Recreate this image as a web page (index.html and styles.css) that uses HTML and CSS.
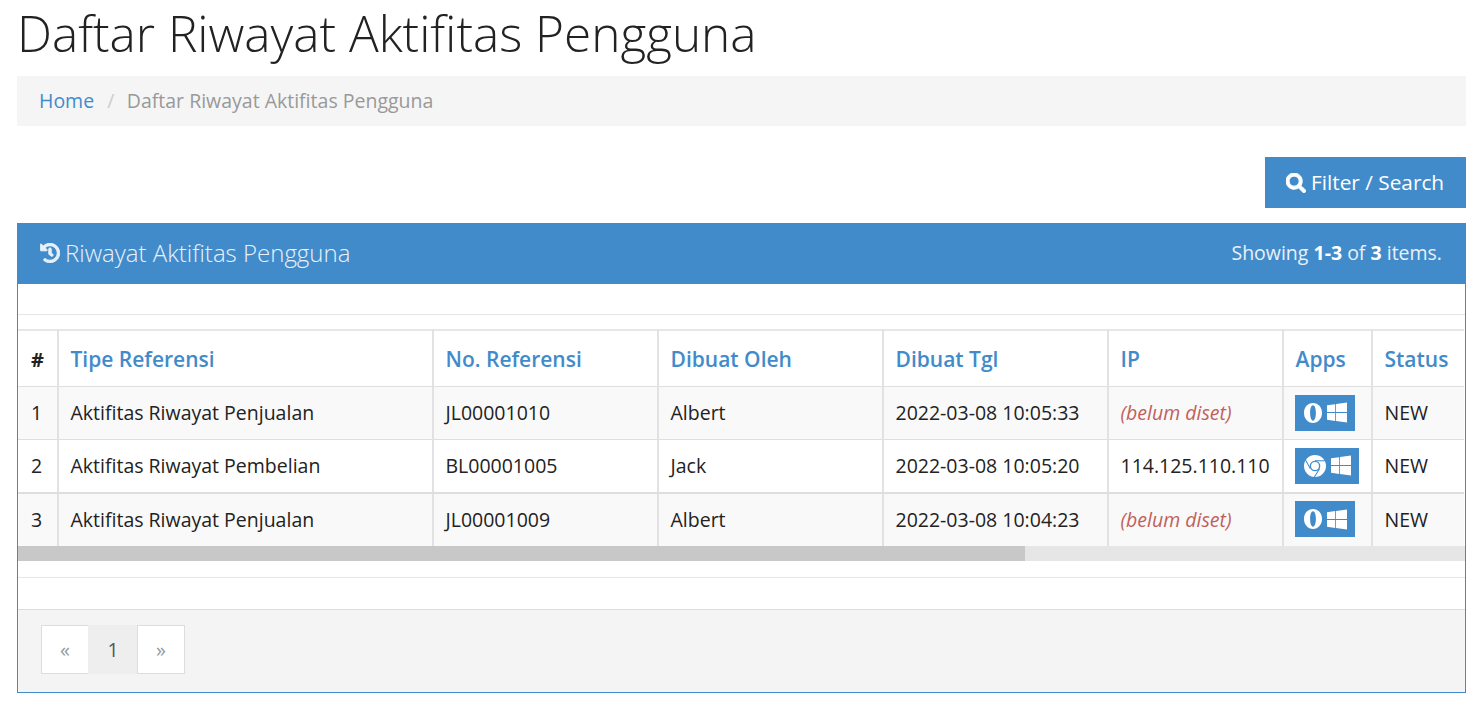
FILE: index.html
```html
<!DOCTYPE html>
<html lang="id">
<head>
<meta charset="utf-8">
<title>Daftar Riwayat Aktifitas Pengguna</title>
<link rel="stylesheet" href="styles.css">
</head>
<body>
<h1 class="title">Daftar Riwayat Aktifitas Pengguna</h1>
<nav class="crumb"><a href="#">Home</a><span class="sep">/</span><span class="here">Daftar Riwayat Aktifitas Pengguna</span></nav>
<div class="actions">
  <button class="btn"><svg class="i-search" viewBox="0 0 512 512"><path class="thick" fill="currentColor" d="M505 442.7L405.3 343c-4.5-4.5-10.6-7-17-7H372c27.6-35.3 44-79.7 44-128C416 93.1 322.9 0 208 0S0 93.1 0 208s93.1 208 208 208c48.3 0 92.7-16.4 128-44v16.3c0 6.4 2.5 12.5 7 17l99.7 99.7c9.4 9.4 24.6 9.4 33.9 0l28.3-28.3c9.4-9.4 9.4-24.6.1-34zM208 336c-70.7 0-128-57.2-128-128 0-70.7 57.2-128 128-128 70.7 0 128 57.2 128 128 0 70.7-57.2 128-128 128z"/></svg>Filter / Search</button>
</div>
<section class="panel">
  <header class="panel-head">
    <h2 class="panel-title"><svg class="i-history" viewBox="0 0 512 512"><path class="thick" fill="currentColor" d="M504 255.531c.253 136.64-111.18 248.372-247.82 248.468-59.015.042-113.223-20.53-155.822-54.911-11.077-8.94-11.905-25.541-1.839-35.607l11.267-11.267c8.609-8.609 22.353-9.551 31.891-1.984C173.062 425.135 212.781 440 256 440c101.705 0 184-82.311 184-184 0-101.705-82.311-184-184-184-48.814 0-93.149 18.969-126.068 49.932l50.754 50.754c10.08 10.08 2.941 27.314-11.313 27.314H24c-8.837 0-16-7.163-16-16V38.627c0-14.254 17.234-21.393 27.314-11.314l49.372 49.372C129.209 34.136 189.552 8 256 8c136.81 0 247.747 110.78 248 247.531zm-180.912 78.784l9.823-12.63c8.138-10.463 6.253-25.542-4.21-33.679L288 256.349V152c0-13.255-10.745-24-24-24h-16c-13.255 0-24 10.745-24 24v135.651l65.409 50.874c10.463 8.137 25.541 6.253 33.679-4.21z"/></svg>Riwayat Aktifitas Pengguna</h2>
    <div class="summary">Showing <b>1-3</b> of <b>3</b> items.</div>
  </header>
  <div class="strip-top"></div>
  <div class="table-wrap">
    <table class="grid">
      <colgroup>
        <col class="c-no"><col class="c-type"><col class="c-ref"><col class="c-by"><col class="c-date"><col class="c-ip"><col class="c-apps"><col class="c-status">
      </colgroup>
      <thead>
        <tr><th class="hash">#</th><th><a href="#">Tipe Referensi</a></th><th><a href="#">No. Referensi</a></th><th><a href="#">Dibuat Oleh</a></th><th><a href="#">Dibuat Tgl</a></th><th><a href="#">IP</a></th><th><a href="#">Apps</a></th><th><a href="#">Status</a></th></tr>
      </thead>
      <tbody>
        <tr class="odd"><td>1</td><td>Aktifitas Riwayat Penjualan</td><td>JL00001010</td><td>Albert</td><td>2022-03-08 10:05:33</td><td><em class="unset">(belum diset)</em></td>
          <td><span class="badge"><svg class="i-opera" viewBox="0 0 20 22"><path fill="currentColor" fill-rule="evenodd" d="M10 0C4.2 0 0 4.7 0 11s4.200 11 10 11 10-4.700 10-11S15.800 0 10 0zm0 2.500c2 0 3.200 3.800 3.200 8.500S12 19.500 10 19.500 6.800 15.700 6.800 11 8 2.500 10 2.500z"/></svg><svg class="i-win" viewBox="0 0 448 512"><path fill="currentColor" d="M0 93.700l183.600-25.300v177.400H0V93.700zm0 324.600l183.600 25.300V268.400H0v149.900zm202.200 28L448 480V268.400H202.200v177.900zm0-380.600v180.100H448V32L202.200 65.700z"/></svg></span></td><td>NEW</td></tr>
        <tr class="tall"><td>2</td><td>Aktifitas Riwayat Pembelian</td><td>BL00001005</td><td>Jack</td><td>2022-03-08 10:05:20</td><td>114.125.110.110</td>
          <td><span class="badge wide"><svg class="i-chrome" viewBox="0 0 24 24"><circle cx="12" cy="12" r="12" fill="currentColor"/><circle cx="12" cy="12" r="5.800" fill="#428bca"/><circle cx="12" cy="12" r="4.300" fill="currentColor"/><path d="M12 6.200h11M6.900 15l-5.200-9.500M17 15l-5.700 9" stroke="#428bca" stroke-width="1.100" fill="none"/></svg><svg class="i-win" viewBox="0 0 448 512"><path fill="currentColor" d="M0 93.700l183.600-25.300v177.400H0V93.700zm0 324.600l183.600 25.300V268.400H0v149.900zm202.200 28L448 480V268.400H202.200v177.900zm0-380.600v180.100H448V32L202.200 65.700z"/></svg></span></td><td>NEW</td></tr>
        <tr class="odd"><td>3</td><td>Aktifitas Riwayat Penjualan</td><td>JL00001009</td><td>Albert</td><td>2022-03-08 10:04:23</td><td><em class="unset">(belum diset)</em></td>
          <td><span class="badge"><svg class="i-opera" viewBox="0 0 20 22"><path fill="currentColor" fill-rule="evenodd" d="M10 0C4.2 0 0 4.7 0 11s4.200 11 10 11 10-4.700 10-11S15.800 0 10 0zm0 2.500c2 0 3.200 3.800 3.200 8.500S12 19.500 10 19.500 6.800 15.700 6.800 11 8 2.500 10 2.500z"/></svg><svg class="i-win" viewBox="0 0 448 512"><path fill="currentColor" d="M0 93.700l183.600-25.300v177.400H0V93.700zm0 324.600l183.600 25.300V268.400H0v149.900zm202.200 28L448 480V268.400H202.200v177.900zm0-380.600v180.100H448V32L202.200 65.700z"/></svg></span></td><td>NEW</td></tr>
      </tbody>
    </table>
    <div class="scrollbar"><div class="thumb"></div></div>
  </div>
  <div class="strip-mid"></div>
  <div class="strip-low"></div>
  <footer class="panel-foot">
    <ul class="pager">
      <li class="page muted">«</li><li class="page current">1</li><li class="page muted">»</li>
    </ul>
  </footer>
</section>
</body>
</html>
```
FILE: styles.css
```css
* { box-sizing: border-box; }
html, body { margin: 0; height: 100%; overflow: hidden; }
body {
  padding: 0 17px;
  background: #fff;
  color: #333;
  font-family: "Open Sans", sans-serif;
  font-size: 19.5px;
}
a { color: #428bca; text-decoration: none; }
.thick { stroke: currentColor; stroke-width: 24; }

.title {
  margin: 0 0 9px;
  height: 67px;
  font-size: 49.5px;
  line-height: 67px;
  font-weight: 300;
  color: #222;
}

.crumb {
  display: flex;
  align-items: center;
  height: 50px;
  padding: 0 22px 2px;
  background: #f5f5f5;
  font-size: 19.5px;
}
.sep { margin: 0 13px; color: #ccc; }
.here { color: #999; margin-left: -0.5px; }

.actions {
  display: flex;
  justify-content: flex-end;
  margin: 31px 0 15px;
}
.btn {
  display: flex;
  align-items: center;
  height: 51px;
  width: 201px;
  padding: 0 0 2px 21px;
  border: 0;
  background: #428bca;
  color: #fff;
  font: 400 20.8px "Open Sans", sans-serif;
}
.i-search { width: 20px; height: 20px; margin: 2px 5px 0 0; }

.panel {
  border: 1px solid #428bca;
  height: 470px;
  display: flex;
  flex-direction: column;
}
.panel-head {
  display: flex;
  align-items: center;
  justify-content: space-between;
  height: 61px;
  margin: -1px -1px 0;
  padding: 0 24px 2px 23px;
  background: #428bca;
  color: #fff;
  flex: none;
}
.panel-title {
  display: flex;
  align-items: center;
  margin: 0;
  font-size: 24px;
  font-weight: 300;
  color: #e8f1f9;
}
.i-history { width: 20px; height: 20px; margin: 0 5px 0 0; }
.summary { font-size: 19.5px; color: #e8f1f9; }
.summary b { color: #fff; }

.strip-top { height: 31px; border-bottom: 1px solid #e6e6e6; flex: none; }

.table-wrap { margin-top: 14px; flex: none; }
.grid {
  width: 1446px;
  table-layout: fixed;
  border-collapse: collapse;
  border-top: 2px solid #e6e6e6;
  font-size: 19.5px;
  color: #222;
}
.c-no { width: 40px; }
.c-type { width: 375px; }
.c-ref, .c-by, .c-date { width: 225px; }
.c-ip { width: 175px; }
.c-apps { width: 89px; }
.c-status { width: 92px; }

.grid th, .grid td {
  padding: 0 12px 0 11.5px;
  text-align: left;
  white-space: nowrap;
  overflow: hidden;
  border-left: 2px solid #e2e2e2;
  border-bottom: 1px solid #dedede;
}
.grid th:first-child, .grid td:first-child { border-left: 0; padding-left: 13px; }
.grid th { height: 56px; padding-top: 2px; font-size: 21px; font-weight: 600; }
.grid td { height: 53px; }
.grid .tall td { height: 54px; border-bottom-width: 2px; }
.grid tbody tr:last-child td { border-bottom: 0; padding-bottom: 2px; }
.grid th.hash { color: #222; font-weight: 700; font-size: 20px; }
.odd td { background: #f9f9f9; }
.unset { color: #c0605c; font-style: italic; }

.badge {
  display: inline-flex;
  align-items: center;
  vertical-align: middle;
  gap: 5px;
  height: 36px;
  margin-left: -0.5px;
  padding: 0 8px 0 9px;
  background: #428bca;
  color: #fff;
}
.i-opera { width: 18px; height: 20px; }
.i-chrome { width: 22px; height: 22px; }
.i-win { width: 20px; height: 23px; }

.scrollbar { height: 15px; background: #e6e6e6; }
.thumb { width: 1007px; height: 15px; background: #c8c8c8; }

.strip-mid { height: 17px; border-bottom: 1px solid #e6e6e6; flex: none; }
.strip-low { height: 32px; border-bottom: 1px solid #ddd; flex: none; }

.panel-foot {
  flex: 1;
  padding: 15px 23px;
  background: #f4f4f4;
}
.pager {
  display: flex;
  margin: 0;
  padding: 0;
  list-style: none;
}
.page {
  display: flex;
  align-items: center;
  justify-content: center;
  width: 48px;
  height: 49px;
  border: 1px solid #ddd;
  background: #fff;
}
.page + .page { margin-left: -1px; }
.page.current { background: #eee; color: #555; border-color: #eee; width: 50px; }
.page.muted { color: #999; font-size: 20px; }
```
